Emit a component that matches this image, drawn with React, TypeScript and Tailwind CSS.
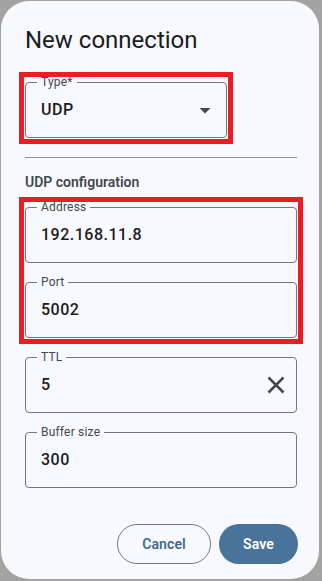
import React from "react";

function Field({
  label,
  value,
  widthClass,
  trailing,
}: {
  label: string;
  value: string;
  widthClass: string;
  trailing?: React.ReactNode;
}) {
  return (
    <div
      className={`relative h-[56px] ${widthClass} rounded-[4px] border border-[#74777f] flex items-center pl-[15px]`}
    >
      <span className="absolute left-[11px] -top-[9px] px-[4px] bg-[#f8f9fe] text-[12px] leading-[16px] tracking-[0.2px] text-[#44474e]">
        {label}
      </span>
      <span className="text-[16px] leading-[24px] tracking-[0.5px] font-medium text-[#1a1c20]">
        {value}
      </span>
      {trailing}
    </div>
  );
}

function RedBox({ children }: { children: React.ReactNode }) {
  return (
    <div className="relative">
      {children}
      <div className="pointer-events-none absolute -left-[6px] -top-[10px] -right-[6px] -bottom-[6px] border-[5px] border-[#ed1c24]" />
    </div>
  );
}

export default function App() {
  return (
    <div className="w-[322px] h-[581px] bg-[#a3a3a3] pt-[1px] pl-[1px] overflow-hidden font-['Roboto','Noto_Sans',sans-serif]">
      <div className="w-[318px] h-[578px] rounded-[28px] bg-[#f8f9fe] pl-[24px] pt-[23px] flex flex-col">
        <h1 className="text-[24px] leading-[32px] font-normal text-[#1a1c20]">New connection</h1>

        <div className="mt-[26px] w-[202px]">
          <RedBox>
            <Field
              label="Type*"
              value="UDP"
              widthClass="w-[202px]"
              trailing={
                <svg className="ml-auto mr-[9px]" width="24" height="24" viewBox="0 0 24 24">
                  <path d="M6.5 10l5.5 5.5 5.5-5.5z" fill="#44474e" />
                </svg>
              }
            />
          </RedBox>
        </div>

        <div className="mt-[19px] h-px w-[272px] bg-[#8e9099]" />

        <div className="mt-[14px] text-[14px] leading-[20px] font-semibold text-[#44474e]">
          UDP configuration
        </div>

        <div className="mt-[15px] w-[272px]">
          <RedBox>
            <div className="flex flex-col gap-[19px]">
              <Field label="Address" value="192.168.11.8" widthClass="w-[272px]" />
              <Field label="Port" value="5002" widthClass="w-[272px]" />
            </div>
          </RedBox>
        </div>

        <div className="mt-[19px]">
          <Field
            label="TTL"
            value="5"
            widthClass="w-[272px]"
            trailing={
              <svg className="ml-auto mr-[8px]" width="24" height="24" viewBox="0 0 24 24">
                <path d="M4.5 4.5L19.5 19.5M19.5 4.5L4.5 19.5" stroke="#44474e" strokeWidth="2.6" />
              </svg>
            }
          />
        </div>

        <div className="mt-[19px]">
          <Field label="Buffer size" value="300" widthClass="w-[272px]" />
        </div>

        <div className="mt-[36px] w-[273px] flex justify-end gap-[8px]">
          <button className="w-[94px] h-[40px] rounded-full border border-[#74777f] text-[14px] font-semibold tracking-[0.1px] text-[#3d6a94]">
            Cancel
          </button>
          <button className="w-[79px] h-[40px] rounded-full bg-[#48739a] text-[14px] font-semibold tracking-[0.1px] text-white">
            Save
          </button>
        </div>
      </div>
    </div>
  );
}
